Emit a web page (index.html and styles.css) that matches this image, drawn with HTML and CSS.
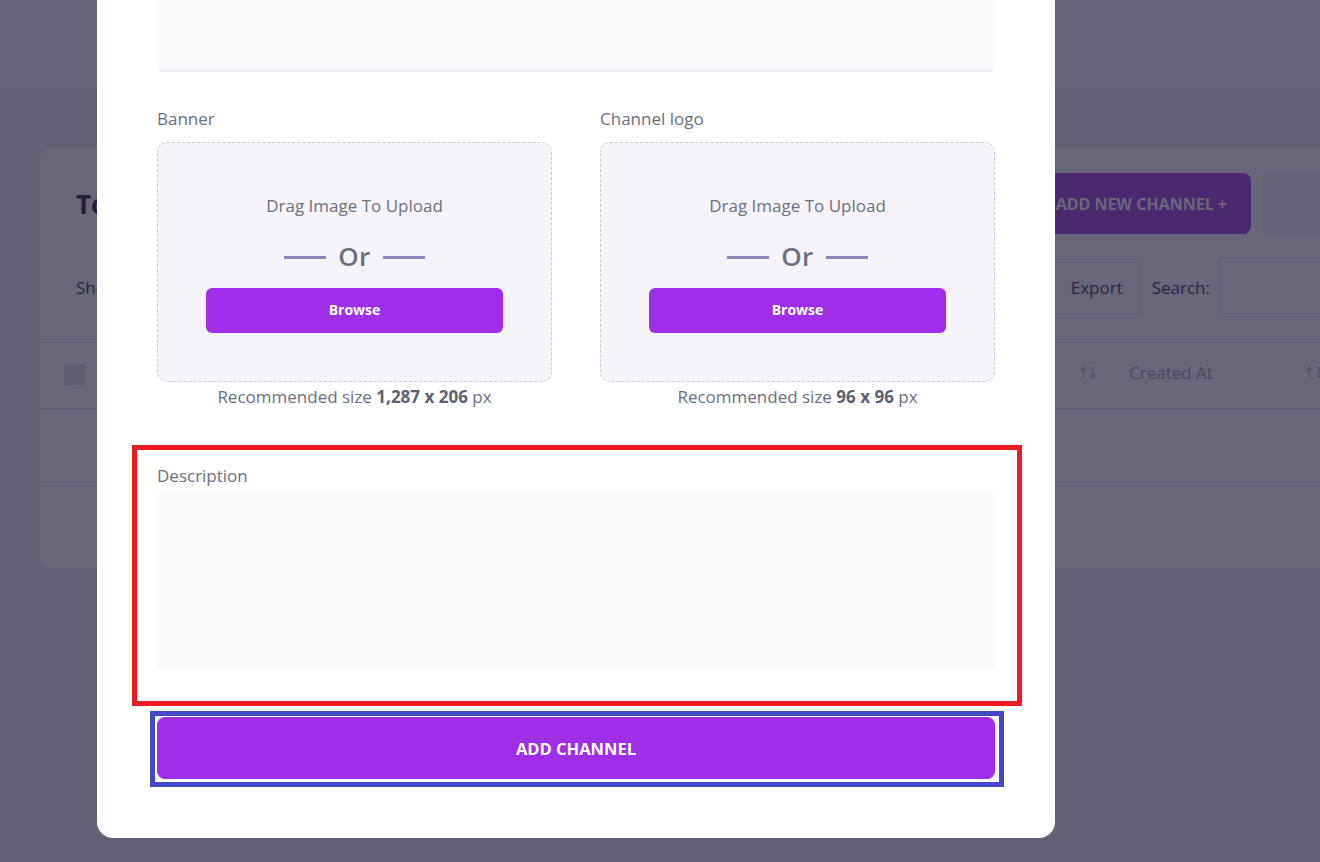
FILE: index.html
```html
<!DOCTYPE html>
<html lang="en">
<head>
<meta charset="utf-8">
<title>Add Channel</title>
<link rel="stylesheet" href="styles.css">
</head>
<body>
<div class="page">
  <header class="topbar"></header>
  <main class="main">
    <section class="card">
      <div class="card-head">
        <h1 class="card-title">Total Channels</h1>
        <div class="head-actions">
          <button class="btn-primary">ADD NEW CHANNEL +</button>
          <button class="btn-light"></button>
        </div>
      </div>
      <div class="toolbar">
        <span class="show">Show 10 entries</span>
        <div class="tools">
          <button class="btn-outline">Export</button>
          <span class="search-label">Search:</span>
          <span class="search-input"></span>
        </div>
      </div>
      <div class="thead">
        <span class="check"></span>
        <span class="th th-grow"><span class="sort">↑↓</span></span>
        <span class="th th-date">Created At <span class="sort">↑↓</span></span>
        <span class="th th-rest"></span>
      </div>
      <div class="trow"></div>
      <div class="tfoot"></div>
    </section>
  </main>
</div>

<div class="overlay">
  <div class="modal">
    <textarea class="input-area top-area" aria-label="About"></textarea>

    <div class="uploads">
      <div class="upload">
        <label class="label upload-label">Banner</label>
        <div class="dropzone">
          <p class="drag">Drag Image To Upload</p>
          <div class="or"><span class="or-line"></span><span class="or-text">Or</span><span class="or-line"></span></div>
          <button class="browse">Browse</button>
        </div>
        <p class="hint">Recommended size <b>1,287 x 206</b> px</p>
      </div>
      <div class="upload">
        <label class="label upload-label">Channel logo</label>
        <div class="dropzone">
          <p class="drag">Drag Image To Upload</p>
          <div class="or"><span class="or-line"></span><span class="or-text">Or</span><span class="or-line"></span></div>
          <button class="browse">Browse</button>
        </div>
        <p class="hint">Recommended size <b>96 x 96</b> px</p>
      </div>
    </div>

    <div class="desc-section">
      <label class="label desc-label">Description</label>
      <textarea class="input-area desc-area"></textarea>
    </div>

    <div class="submit-wrap">
      <button class="submit">ADD CHANNEL</button>
    </div>
  </div>
</div>
</body>
</html>
```

FILE: styles.css
```css
* { box-sizing: border-box; }
html, body { margin: 0; height: 100%; }
body {
  font-family: "Open Sans", "Noto Sans", sans-serif;
  background: #efeffb;
  overflow: hidden;
  color: #6b7080;
}

/* ---------- background page ---------- */
.topbar { height: 88px; background: #fbfbfd; }
.main { padding: 60px 0 0 40px; }
.card {
  width: 1358px;
  height: 420px;
  background: #ffffff;
  border-radius: 10px;
}
.card-head {
  display: flex;
  align-items: center;
  justify-content: space-between;
  padding: 25px 36px 0;
}
.card-title { margin: 0; font-size: 26px; font-weight: 700; color: #252440; }
.head-actions { display: flex; gap: 11px; }
.btn-primary {
  height: 61px;
  padding: 0 24px;
  border: 0;
  border-radius: 8px;
  background: #a143e9;
  color: #ffffff;
  font: 700 16px "Open Sans", sans-serif;
}
.btn-light { width: 100px; height: 61px; border: 0; border-radius: 8px; background: #f6f5f9; }
.toolbar {
  display: flex;
  align-items: center;
  justify-content: space-between;
  height: 60px;
  margin-top: 23px;
  padding: 0 36px;
}
.show { font-size: 17px; color: #3d3c55; }
.tools { display: flex; align-items: center; }
.btn-outline {
  height: 56px;
  padding: 0 18px 0 24px;
  border: 1px solid #ecebf3;
  border-radius: 6px;
  background: #ffffff;
  color: #3d3c55;
  font: 400 17px "Open Sans", sans-serif;
}
.search-label { margin: 0 8px 0 10px; font-size: 17px; color: #3d3c55; }
.search-input { width: 144px; height: 60px; border: 1px solid #ecebf3; border-radius: 6px; }
.thead {
  display: flex;
  align-items: center;
  height: 70px;
  margin-top: 22px;
  padding-left: 24px;
  padding-bottom: 3px;
  border-top: 1px solid #ebebf3;
  border-bottom: 1px solid #ebebf3;
  font-size: 17px;
  color: #a2a3b8;
}
.check { width: 21px; height: 21px; border-radius: 3px; background: #e4e4f2; margin-top: 3px; }
.th { display: flex; align-items: center; }
.th-grow { flex: 1; justify-content: flex-end; padding-right: 14px; }
.th-date { width: 212px; justify-content: space-between; padding-left: 19px; }
.th-rest { width: 76px; }
.sort {
  font-family: "DejaVu Sans", sans-serif;
  font-size: 15px;
  letter-spacing: -3px;
  color: #c4c5d4;
}
.trow { height: 78px; border-bottom: 1px solid #ebebf3; }
.tfoot { height: 80px; }

/* ---------- overlay + modal ---------- */
.overlay {
  position: fixed;
  inset: 0;
  background: rgba(33, 30, 55, 0.68);
  display: flex;
  align-items: flex-end;
  padding: 0 0 24px 97px;
}
.modal {
  width: 958px;
  flex-shrink: 0;
  background: #ffffff;
  border-radius: 16px;
  padding: 40px 60px 51px;
}
.label {
  display: block;
  font-size: 17px;
  line-height: 24px;
  color: #6b7080;
}
.input-area {
  display: block;
  width: 100%;
  border: 0;
  border-radius: 6px;
  background: #fafafc;
  resize: none;
  font: inherit;
}
.top-area { height: 150px; border-bottom: 2px solid #edeff7; }

.uploads {
  display: grid;
  grid-template-columns: 1fr 1fr;
  column-gap: 48px;
  margin-top: 35px;
}
.upload-label { margin-bottom: 11px; }
.dropzone {
  height: 240px;
  border: 1px dashed #c9c8d3;
  border-radius: 10px;
  background: #f6f4fa;
  display: flex;
  flex-direction: column;
  align-items: center;
  padding-top: 51px;
}
.drag { margin: 0; font-size: 17px; line-height: 24px; color: #6b7080; }
.or {
  display: flex;
  align-items: center;
  gap: 12px;
  height: 30px;
  margin-top: 23px;
}
.or-line { width: 42px; height: 3px; background: #8a86b8; margin-top: 2px; }
.or-text { font-size: 26px; line-height: 30px; font-weight: 600; letter-spacing: 0.5px; color: #6b7080; }
.browse {
  width: 297px;
  height: 45px;
  margin-top: 17px;
  border: 0;
  border-radius: 6px;
  background: #a02ee8;
  color: #ffffff;
  font: 700 14px/1 "Open Sans", sans-serif;
  padding-bottom: 2px;
}
.hint {
  margin: 3px 0 0;
  text-align: center;
  font-size: 17px;
  line-height: 24px;
  color: #6b7080;
}
.hint b { font-weight: 700; color: #5c6173; }

.desc-section {
  margin: 36px -27px 0 -25px;
  border: 5px solid #ed1c24;
  padding: 14px 22px 31px 20px;
}
.desc-label { margin-bottom: 4px; }
.desc-area { height: 178px; }

.submit-wrap {
  margin: 5px -9px 0 -7px;
  border: 5px solid #4248c8;
  padding: 1px 4px 3px 2px;
}
.submit {
  display: block;
  width: 100%;
  height: 62px;
  border: 0;
  border-radius: 8px;
  background: #a02ee8;
  color: #ffffff;
  font: 700 16.5px "Open Sans", sans-serif;
}
```
